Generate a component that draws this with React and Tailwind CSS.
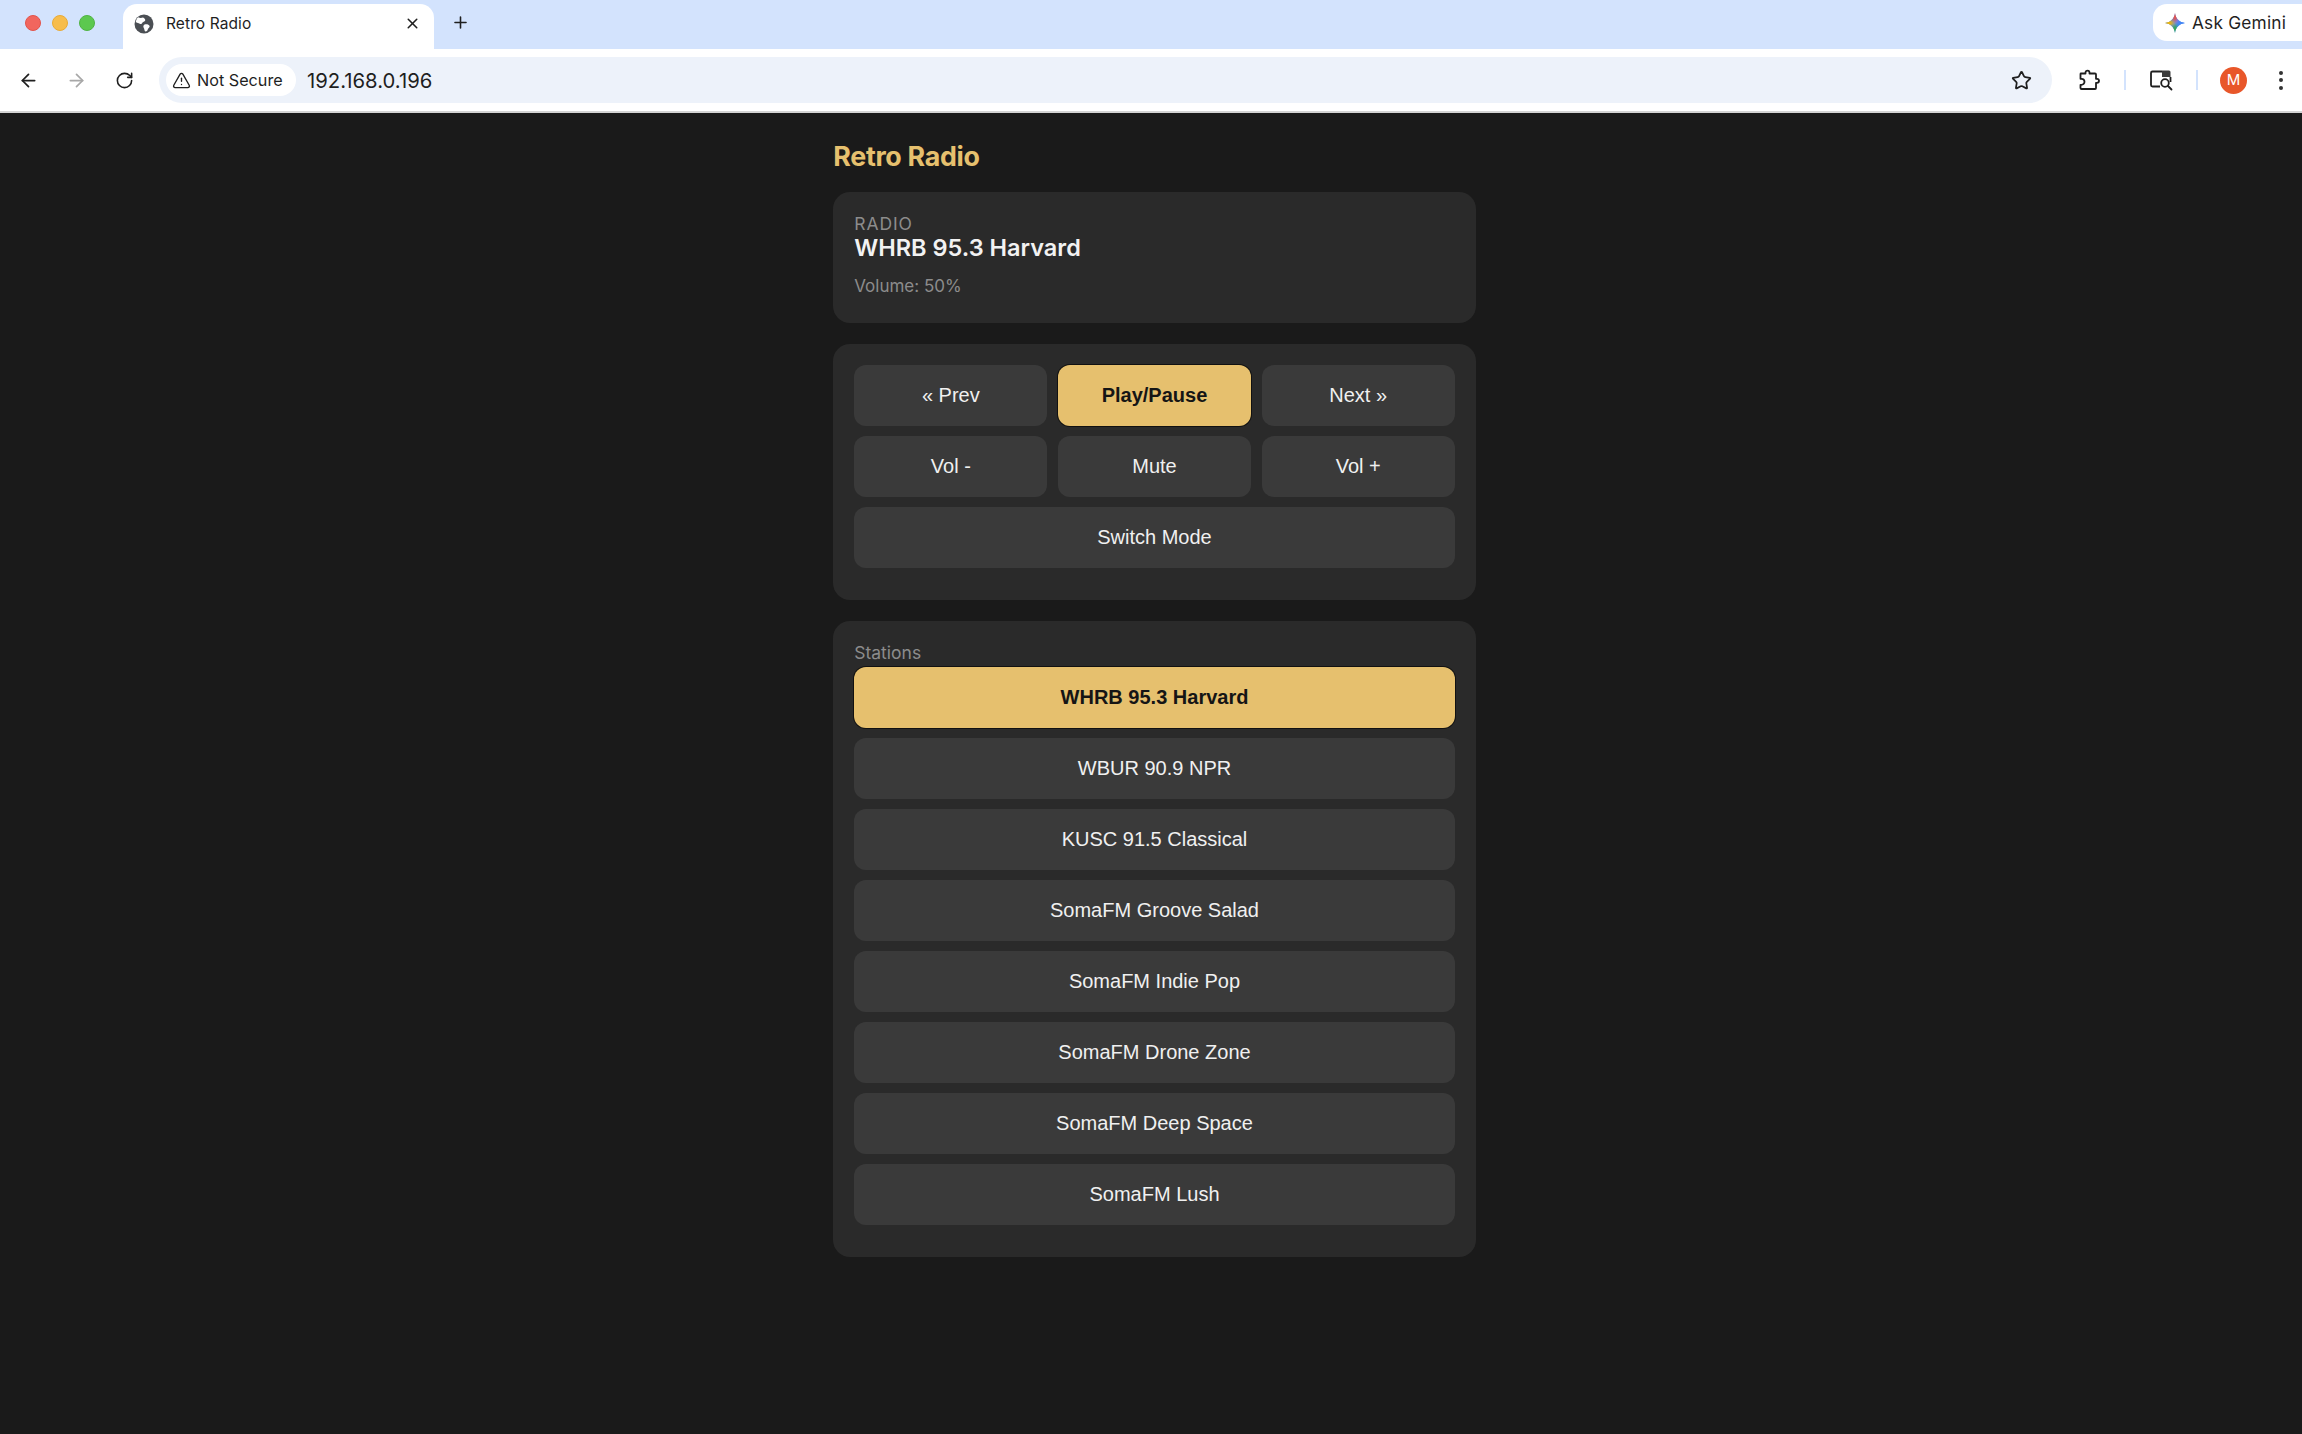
import React from "react";
import { ArrowLeft, ArrowRight, RotateCw, X, Plus, TriangleAlert, Star } from "lucide-react";

function Globe() {
  return (
    <svg width="20" height="20" viewBox="0 0 20 20">
      <circle cx="10" cy="10" r="9.500" fill="#4b4f54" />
      <path d="M4 3.200C6 4.200 7.500 4 9 3.500c1.200.6 2.600 1.500 2.200 3-.4 1.400-2.600 1.200-3 2.600-.3 1-1.500 1-2.500.6C4.600 9.300 3 8.300 1.800 8.200 2 6.200 2.800 4.400 4 3.200Z" fill="#fff" />
      <path d="M10.500 10.500c1.800-.6 3.800-.2 4.800 1 .7.8.2 2-.8 2.700-.8.6-.6 2-1.500 2.800-1 .7-2 .6-2.400-.4-.3-.9-.1-1.900-.8-2.700-.7-1-.6-2.800.7-3.400Z" fill="#fff" />
    </svg>
  );
}

function GeminiIcon() {
  return (
    <svg width="20" height="20" viewBox="0 0 20 20">
      <defs>
        <clipPath id="gemini-star">
          <path d="M10 0C10.600 5.400 14.600 9.400 20 10 14.600 10.600 10.600 14.600 10 20 9.400 14.600 5.400 10.600 0 10 5.400 9.400 9.400 5.400 10 0Z" />
        </clipPath>
        <filter id="gemini-blur" x="-30%" y="-30%" width="160%" height="160%">
          <feGaussianBlur stdDeviation="1.600" />
        </filter>
      </defs>
      <g clipPath="url(#gemini-star)">
        <rect width="20" height="20" fill="#4285f4" />
        <g filter="url(#gemini-blur)">
          <path d="M10 10 3 -2H17Z" fill="#e8524a" />
          <path d="M10 10 -2 3V17Z" fill="#f5b800" />
          <path d="M10 10 3 22H17Z" fill="#34a853" />
          <path d="M10 10 22 3V17Z" fill="#4285f4" />
        </g>
      </g>
    </svg>
  );
}

function Extensions() {
  return (
    <svg width="22" height="22" viewBox="0 0 22 22" fill="none" stroke="#1f1f1f" strokeWidth="1.800" strokeLinejoin="round">
      <path d="M3 4.500h4.500V3.600a2 2 0 0 1 4 0v.9H17a1 1 0 0 1 1 1v4.300h1a2 2 0 0 1 0 4h-1V19a1 1 0 0 1-1 1H3.500a1 1 0 0 1-1-1v-3.200h1a3 3 0 0 0 0-6h-1V5a.5.5 0 0 1 .5-.5Z" />
    </svg>
  );
}

function TabSearch() {
  return (
    <svg width="24" height="22" viewBox="0 0 24 22" fill="none">
      <path d="M13 2.500H3.500a1.500 1.500 0 0 0-1.500 1.500v12a1.500 1.500 0 0 0 1.500 1.500H11" stroke="#1f1f1f" strokeWidth="1.800" />
      <path d="M13 1.500h7a1.500 1.500 0 0 1 1.500 1.500v5H13Z" fill="#3a3a3a" />
      <path d="M21.500 8v5" stroke="#1f1f1f" strokeWidth="1.800" />
      <circle cx="16" cy="14" r="3.800" stroke="#1f1f1f" strokeWidth="1.800" />
      <path d="m19 17 3.500 3.500" stroke="#1f1f1f" strokeWidth="1.800" strokeLinecap="round" />
    </svg>
  );
}

function Chrome() {
  return (
    <header className="font-['Inter',sans-serif] text-[#1f1f1f]">
      <div className="flex h-[49px] items-end bg-[#d3e3fd]">
        <div className="flex h-[49px] w-[123px] shrink-0 items-center gap-[11px] pb-[3px] pl-[25px]">
          <span className="h-4 w-4 rounded-full border border-[#e2544b] bg-[#f1665e]" />
          <span className="h-4 w-4 rounded-full border border-[#e9ab36] bg-[#f7bd4c]" />
          <span className="h-4 w-4 rounded-full border border-[#50b344] bg-[#5cc84f]" />
        </div>
        <div className="flex h-[45px] w-[311px] shrink-0 items-center rounded-t-[14px] bg-white pb-[6px] pl-[11px] pr-[13px]">
          <Globe />
          <span className="ml-[12px] flex-1 text-[15.500px] tracking-[0.1px]">Retro Radio</span>
          <X size={17} strokeWidth={2.200} />
        </div>
        <div className="flex h-[49px] w-[52px] shrink-0 items-center justify-center pb-[4px]">
          <Plus size={19} strokeWidth={2} />
        </div>
        <div className="flex-1" />
        <div className="mb-[8px] flex h-[37px] w-[149px] shrink-0 items-center gap-[7px] rounded-l-[14px] bg-white pl-[12px]">
          <GeminiIcon />
          <span className="text-[17.300px] tracking-[0.2px]">Ask Gemini</span>
        </div>
      </div>
      <div className="flex h-[64px] items-center border-b-2 border-[#d4d4d4] bg-white">
        <div className="flex w-[159px] shrink-0 items-center">
          <ArrowLeft size={21} strokeWidth={2} className="ml-[18px]" />
          <ArrowRight size={21} strokeWidth={2} className="ml-[27px] text-[#a8a8a8]" />
          <RotateCw size={19} strokeWidth={2} className="ml-[28px]" />
        </div>
        <div className="flex h-[46px] flex-1 items-center rounded-full bg-[#edf2fa] pl-[7px] pr-[20px]">
          <div className="flex h-8 w-[130px] items-center rounded-full bg-white pl-[6px]">
            <TriangleAlert size={19} strokeWidth={1.700} />
            <span className="ml-[6px] text-[16.200px]">Not Secure</span>
          </div>
          <span className="ml-[11px] flex-1 pt-[2px] text-[20.300px]">192.168.0.196</span>
          <Star size={21} strokeWidth={2} />
        </div>
        <div className="flex w-[250px] shrink-0 items-center">
          <span className="ml-[26px] flex"><Extensions /></span>
          <span className="ml-[24px] h-[20px] w-[2px] bg-[#d3e3fd]" />
          <span className="ml-[23px] flex"><TabSearch /></span>
          <span className="ml-[23px] h-[20px] w-[2px] bg-[#d3e3fd]" />
          <span className="ml-[22px] flex h-[27px] w-[27px] items-center justify-center rounded-full bg-[#e8572a] text-[15px] text-white">M</span>
          <span className="ml-[32px] flex flex-col gap-[3.500px]">
            <span className="h-[4px] w-[4px] rounded-full bg-[#333]" />
            <span className="h-[4px] w-[4px] rounded-full bg-[#333]" />
            <span className="h-[4px] w-[4px] rounded-full bg-[#333]" />
          </span>
        </div>
      </div>
    </header>
  );
}

function Btn({ children, active, className = "" }) {
  return (
    <button
      className={
        "flex h-[60.500px] items-center justify-center rounded-[12px] font-['Liberation_Sans',Arial,sans-serif] text-[20px] " +
        (active
          ? "bg-[#e6c06e] font-bold text-[#151515] ring-1 ring-[#111111] "
          : "bg-[#3a3a3a] text-[#f0f0f0] ") +
        className
      }
    >
      {children}
    </button>
  );
}

const stations = [
  "WHRB 95.3 Harvard",
  "WBUR 90.9 NPR",
  "KUSC 91.5 Classical",
  "SomaFM Groove Salad",
  "SomaFM Indie Pop",
  "SomaFM Drone Zone",
  "SomaFM Deep Space",
  "SomaFM Lush",
];

export default function App() {
  return (
    <div className="flex min-h-[1434px] flex-col bg-[#1a1a1a]">
      <Chrome />
      <main className="flex flex-1 justify-center pl-[7px] font-['Inter',sans-serif]">
        <div className="w-[642.500px]">
          <h1 className="mt-[27px] text-[26.800px] leading-[32px] font-bold tracking-[-0.3px] text-[#e6c06e]">Retro Radio</h1>
          <section className="mt-[20px] h-[131px] rounded-[17px] bg-[#2a2a2a] px-[21px] pt-[22px]">
            <div className="text-[17.500px] leading-[20px] tracking-[0.9px] text-[#8c8c8c]">RADIO</div>
            <div className="text-[23.500px] leading-[28px] font-semibold text-[#f2f2f2]">WHRB 95.3 Harvard</div>
            <div className="mt-[12px] text-[17px] leading-[24px] text-[#8c8c8c]">Volume: 50%</div>
          </section>
          <section className="mt-[21px] rounded-[17px] bg-[#2a2a2a] px-[21px] pt-[21px] pb-[32px]">
            <div className="grid grid-cols-3 gap-[10.500px]">
              <Btn>« Prev</Btn>
              <Btn active>Play/Pause</Btn>
              <Btn>Next »</Btn>
              <Btn>Vol -</Btn>
              <Btn>Mute</Btn>
              <Btn>Vol +</Btn>
              <Btn className="col-span-3">Switch Mode</Btn>
            </div>
          </section>
          <section className="mt-[21px] rounded-[17px] bg-[#2a2a2a] px-[21px] pt-[19.500px] pb-[32px]">
            <div className="mb-[2px] text-[17.500px] leading-[25px] text-[#8c8c8c]">Stations</div>
            <div className="flex flex-col gap-[10.500px]">
              {stations.map((s, i) => (
                <Btn key={s} active={i === 0}>{s}</Btn>
              ))}
            </div>
          </section>
        </div>
      </main>
    </div>
  );
}
